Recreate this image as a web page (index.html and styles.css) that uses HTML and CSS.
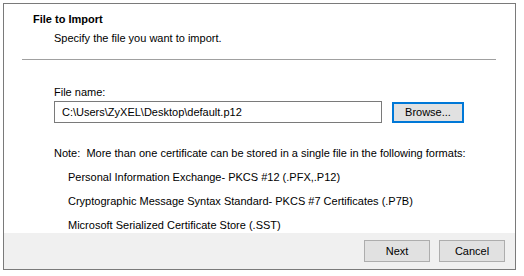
FILE: index.html
```html
<!DOCTYPE html>
<html lang="en">
<head>
    <meta charset="UTF-8">
    <title>Certificate Import Wizard</title>
    <link rel="stylesheet" href="styles.css">
</head>
<body>
    <div class="wizard">
        <div class="wizard-header">
            <div class="wizard-title">File to Import</div>
            <div class="wizard-subtitle">Specify the file you want to import.</div>
        </div>
        <div class="divider"></div>

        <div class="wizard-body">
            <label class="field-label" for="file-name">File name:</label>
            <div class="file-row">
                <input type="text" id="file-name" class="file-input" value="C:\Users\ZyXEL\Desktop\default.p12">
                <button type="button" class="btn btn-focus">Browse...</button>
            </div>

            <p class="note">Note:&nbsp; More than one certificate can be stored in a single file in the following formats:</p>
            <ul class="formats">
                <li>Personal Information Exchange- PKCS #12 (.PFX,.P12)</li>
                <li>Cryptographic Message Syntax Standard- PKCS #7 Certificates (.P7B)</li>
                <li>Microsoft Serialized Certificate Store (.SST)</li>
            </ul>
        </div>

        <div class="wizard-footer">
            <button type="button" class="btn btn-wide">Next</button>
            <button type="button" class="btn btn-wide">Cancel</button>
        </div>
    </div>
</body>
</html>
```

FILE: styles.css
```css
:root {
    --frame: #7a7a7a;
    --line: #a0a0a0;
    --footer: #f0f0f0;
    --btn-bg: #e1e1e1;
    --btn-border: #adadad;
    --focus: #0078d7;
    --text: #000000;
}

body {
    margin: 0;
    background-color: #ffffff;
    font-family: 'Liberation Sans', Arial, sans-serif;
    font-size: 11px;
    color: var(--text);
}

.wizard {
    margin: 3px 0 0 3px;
    width: 511px;
    height: 265px;
    border: 1px solid var(--frame);
    display: flex;
    flex-direction: column;
    background-color: #ffffff;
}

.wizard-header {
    padding: 8px 0 0 29px;
    line-height: 15px;
}

.wizard-title {
    font-weight: bold;
}

.wizard-subtitle {
    margin-top: 4px;
    padding-left: 21px;
}

.divider {
    height: 1px;
    margin: 13px 19px 0 18px;
    background-color: var(--line);
}

.wizard-body {
    flex: 1;
    padding: 25px 0 0 50px;
    line-height: 15px;
}

.field-label {
    display: block;
    margin-bottom: 1px;
}

.file-row {
    display: flex;
    align-items: center;
    gap: 10px;
}

.file-input {
    width: 328px;
    height: 22px;
    box-sizing: border-box;
    border: 1px solid var(--frame);
    padding: 0 7px;
    font-family: inherit;
    font-size: 11px;
    color: var(--text);
    outline: none;
}

.btn {
    height: 21px;
    box-sizing: border-box;
    background-color: var(--btn-bg);
    border: 1px solid var(--btn-border);
    font-family: inherit;
    font-size: 11px;
    color: var(--text);
    padding: 0;
}

.btn-focus {
    width: 72px;
    border: 2px solid var(--focus);
}

.note {
    margin: 23px 0 0 0;
}

.formats {
    list-style: none;
    margin: 0;
    padding: 0 0 0 14px;
}

.formats li {
    margin-top: 9px;
}

.wizard-footer {
    height: 36px;
    background-color: var(--footer);
    display: flex;
    justify-content: flex-end;
    align-items: center;
    gap: 9px;
    padding-right: 10px;
}

.btn-wide {
    width: 66px;
    height: 22px;
}
```
